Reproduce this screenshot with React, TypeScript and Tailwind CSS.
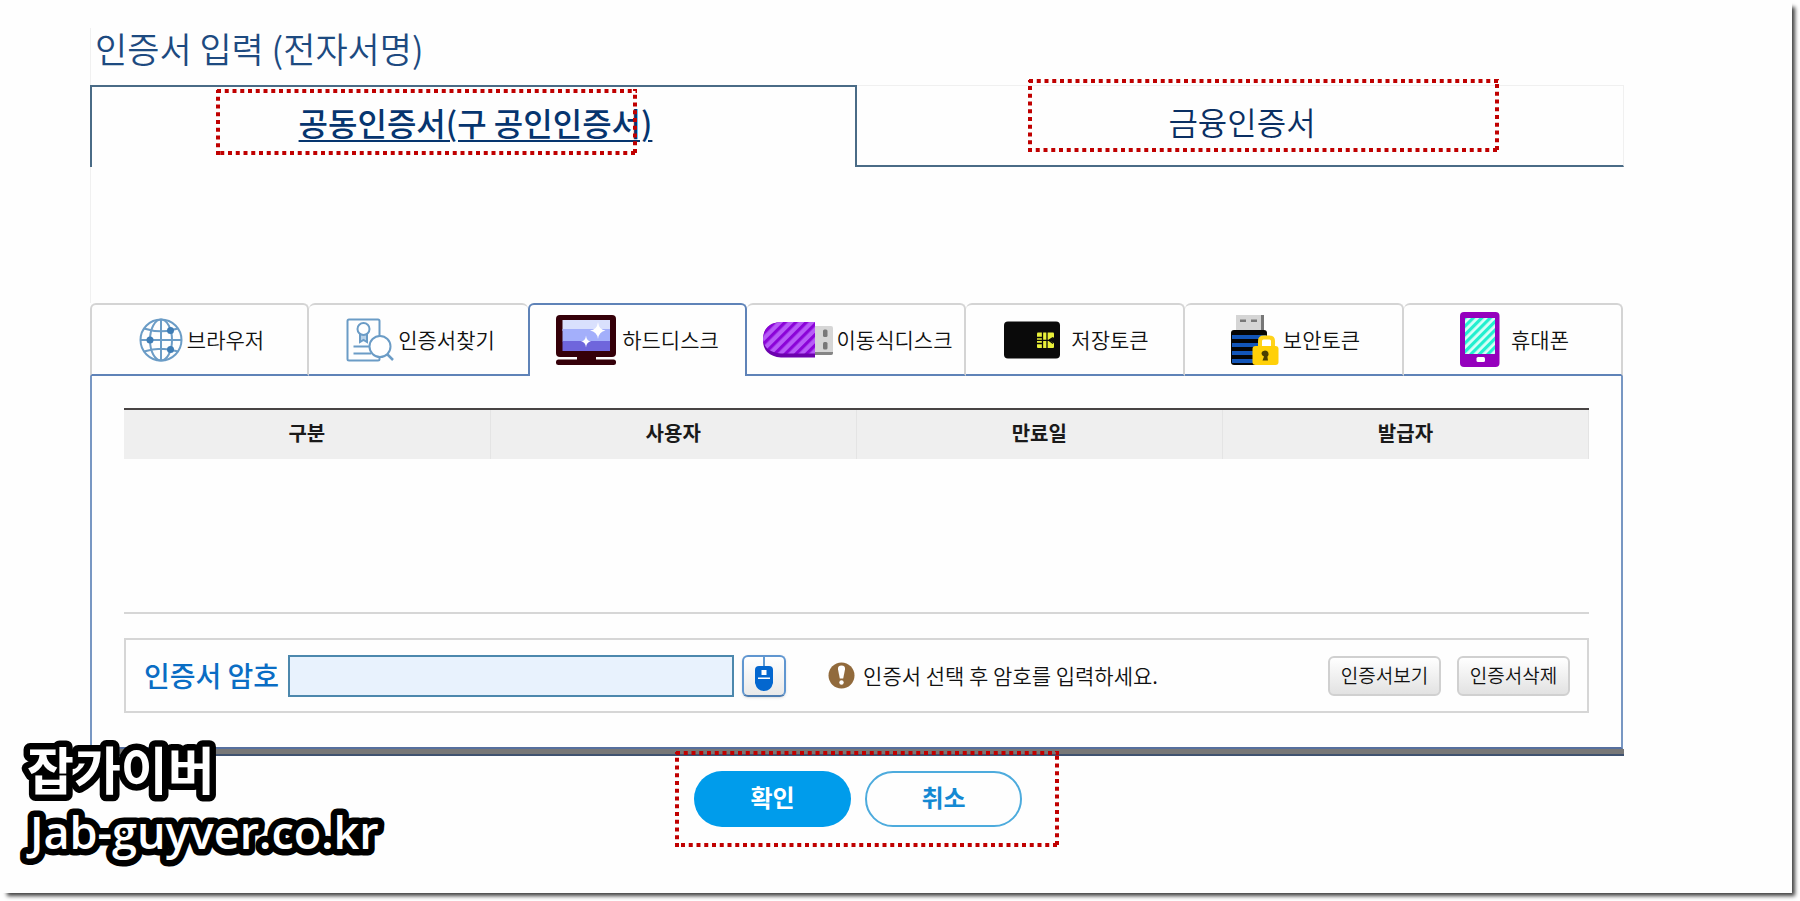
import type { ReactNode } from "react";

const GlobeIcon = () => (
  <svg width="44" height="44" viewBox="0 0 44 44" fill="none" stroke="#6b9cc6" strokeWidth="2" aria-hidden="true">
    <circle cx="22" cy="22" r="20.5" />
    <ellipse cx="22" cy="22" rx="11" ry="20.5" />
    <path d="M22 1.5v41M1.5 22h41M5 10.5Q22 16 39 10.5M5 33.5Q22 28 39 33.5" />
    <g fill="#3f7db5" stroke="none">
      <circle cx="31.500" cy="12.500" r="3.500" />
      <circle cx="11" cy="22" r="3.500" />
      <circle cx="31.500" cy="31.500" r="3.500" />
    </g>
  </svg>
);

const CertSearchIcon = () => (
  <svg width="48" height="44" viewBox="0 0 48 44" fill="none" stroke="#6b9cc6" strokeWidth="2" aria-hidden="true">
    <rect x="1.500" y="1.500" width="32" height="41" rx="1.500" />
    <path d="M14 15v9l3.500-2 3.500 2v-9" fill="#b9d2e8" />
    <circle cx="17.500" cy="11" r="6" fill="#fff" />
    <path d="M7.500 28.500H23M7.500 35.500H25" />
    <circle cx="34" cy="28.500" r="10.500" fill="#fff" />
    <path d="m41 36 6 6" strokeWidth="2.500" />
  </svg>
);

const MonitorIcon = () => (
  <svg width="62" height="52" viewBox="0 0 62 52" aria-hidden="true">
    <rect x="0" y="1" width="60" height="42" rx="4" fill="#350009" />
    <path d="M21 41h19v6H21z" fill="#350009" />
    <rect x="0" y="45.500" width="60" height="5.500" rx="2.500" fill="#350009" />
    <path d="M6.500 6H54v11H6.500z" fill="#d9e0fd" />
    <path d="M6.500 15H54v12.500H6.500z" fill="#a3affb" />
    <path d="M6.500 27H54v10H6.500z" fill="#6f66dc" />
    <path d="M42 8q1 8 7.500 8.500Q43 17.500 42 25q-1-7.500-8-8.500Q41 16 42 8zM30 21.500q.500 5.500 5 6-4.500.500-5 6-.500-5.500-5-6 4.500-.500 5-6z" fill="#fff" />
  </svg>
);

const UsbIcon = () => (
  <svg width="70" height="38" viewBox="0 0 70 38" aria-hidden="true">
    <defs>
      <pattern id="usb-stripes" width="7.500" height="7.500" patternUnits="userSpaceOnUse" patternTransform="rotate(45)">
        <rect width="7.500" height="7.500" fill="#b75cf7" />
        <rect width="3.200" height="7.500" fill="#8b04d8" />
      </pattern>
    </defs>
    <path d="M52 5h16q2 0 2 2v25q0 2-2 2H52z" fill="#d6d6d6" />
    <path d="M52 31h18v1q0 2-2 2H52z" fill="#858585" />
    <rect x="60" y="8.500" width="4.500" height="7.500" rx="1.500" fill="#787878" />
    <rect x="60" y="21" width="4.500" height="7.500" rx="1.500" fill="#787878" />
    <path d="M52 1H18Q0 2 0 19q0 16 18 17.500h34z" fill="#6c02ae" />
    <path d="M52 1H18Q1 2 0 18q1 13 18 14.500h34z" fill="url(#usb-stripes)" />
  </svg>
);

const CardIcon = () => (
  <svg width="63" height="38" viewBox="0 0 63 38" aria-hidden="true">
    <rect x="0" y="0.500" width="56" height="37" rx="4" fill="#0a0a0a" />
    <rect x="33" y="11.500" width="17" height="15.500" rx="1" fill="#e9f03a" />
    <path d="M38.500 11v16.500M43 11v16.500M33 16.500h5.500M33 19.300h17M33 22.500h5.500M45 19l4-2.500M45 19.500l4 3" stroke="#0a0a0a" strokeWidth="1.300" />
    <path d="M45 19.300l5-3v6z" fill="#0a0a0a" />
  </svg>
);

const SecureUsbIcon = () => (
  <svg width="48" height="52" viewBox="0 0 48 52" aria-hidden="true">
    <path d="M5 1h28v16H5z" fill="#d5d5d5" />
    <path d="M30 1h3v16h-3z" fill="#777" />
    <path d="M9 5.500h6V8H9zM20 5.500h6V8h-6z" fill="#777" />
    <rect x="0" y="16" width="36" height="35" rx="3" fill="#050505" />
    <path d="M1 21h34v4H1zM1 29h34v4H1zM1 37h34v4H1zM1 45h34v4H1z" fill="#1255b8" />
    <path d="M29 34v-7q0-3.500 3.500-3.500h6Q42 23.500 42 27v7" fill="#fff" stroke="#ffd31a" strokeWidth="4" />
    <rect x="21.500" y="32" width="26" height="19" rx="3" fill="#ffd008" />
    <path d="M34 36.500a3.600 3.600 0 0 1 2.400 6.300L37 46.500h-5.500l1.500-4q-2.500-1-2.500-3 0-2.500 3.500-3z" fill="#4a3d00" />
  </svg>
);

const PhoneIcon = () => (
  <svg width="47" height="55" viewBox="0 0 47 55" aria-hidden="true">
    <defs>
      <pattern id="phone-stripes" width="6" height="6" patternUnits="userSpaceOnUse" patternTransform="rotate(45)">
        <rect width="6" height="6" fill="#d9fff8" />
        <rect width="3.200" height="6" fill="#22efcf" />
      </pattern>
    </defs>
    <rect x="0" y="0" width="39.500" height="55" rx="4" fill="#9500bd" />
    <path d="M5 6h30v36H5z" fill="url(#phone-stripes)" />
    <rect x="16.500" y="45" width="8.500" height="5" rx="1.500" fill="#fff" />
  </svg>
);

const MouseIcon = () => (
  <svg width="22" height="36" viewBox="0 0 22 36" aria-hidden="true">
    <path d="M11 0v11" stroke="#2b79c4" strokeWidth="1.500" />
    <path d="M2 13q0-4 4-4h10q4 0 4 4v13q-2 8-9 8t-9-8z" fill="#0467cf" />
    <path d="M8.500 13h5v5h-5zM5 20.500h12V22H5z" fill="#fff" />
  </svg>
);

const AlertIcon = () => (
  <svg width="27" height="27" viewBox="0 0 27 27" aria-hidden="true">
    <circle cx="13.500" cy="13.500" r="13" fill="#916a3c" />
    <path d="M13.500 3.500q4 0 3.500 4l-1.800 9h-3.400L10 7.500q-.500-4 3.500-4z" fill="#fff" />
    <circle cx="13.500" cy="20.500" r="2.200" fill="#fff" />
  </svg>
);

const Marker = ({ className }: { className: string }) => (
  <svg className={`pointer-events-none absolute ${className}`} aria-hidden="true">
    <g stroke="#c00000" strokeWidth="4" strokeDasharray="4 3.750">
      <line x1="1" y1="2" x2="100%" y2="2" />
      <line x1="2" y1="100%" x2="2" y2="1" />
    </g>
    <svg x="100%" y="100%" overflow="visible">
      <g stroke="#c00000" strokeWidth="4" strokeDasharray="4 3.750">
        <line x1="-2" y1="-2" x2="-2" y2="-100%" />
        <line x1="-2" y1="-2" x2="-100%" y2="-2" />
      </g>
    </svg>
  </svg>
);

const Watermark = () => (
  <svg
    width="400"
    height="170"
    viewBox="0 0 400 170"
    className="pointer-events-none absolute bottom-0 left-0"
    fill="#fff"
    stroke="#000"
    strokeWidth="13"
    strokeLinejoin="round"
    paintOrder="stroke"
  >
    <text x="27" y="67" className="font-['Noto_Sans_CJK_KR',sans-serif] text-[51px] font-bold">잡가이버</text>
    <text x="30" y="126" className="font-['Open_Sans',sans-serif] text-[45px] font-semibold">Jab-guyver.co.kr</text>
  </svg>
);

const media: { name: string; icon: ReactNode }[] = [
  { name: "브라우저", icon: <GlobeIcon /> },
  { name: "인증서찾기", icon: <CertSearchIcon /> },
  { name: "하드디스크", icon: <MonitorIcon /> },
  { name: "이동식디스크", icon: <UsbIcon /> },
  { name: "저장토큰", icon: <CardIcon /> },
  { name: "보안토큰", icon: <SecureUsbIcon /> },
  { name: "휴대폰", icon: <PhoneIcon /> },
];

const columns = ["구분", "사용자", "만료일", "발급자"];

export default function App() {
  return (
    <div className="min-h-screen bg-white pr-2 pb-2 font-['Noto_Sans_CJK_KR',sans-serif]">
      <div className="relative min-h-[893px] bg-[#fefefe] pt-7 pr-[168px] pl-[90px] shadow-[5px_5px_4px_-2px_rgba(0,0,0,0.75)]">
        <div className="border-l border-[#f0f0f0]">
          <h1 className="h-[57px] pt-0.5 pl-1 text-[35px] leading-9 font-[350] text-[#1d4a80]">인증서 입력 (전자서명)</h1>
        </div>

        <div role="tablist" aria-label="인증서 종류" className="grid h-[82px] grid-cols-2 text-[32px] text-[#0a2f63]">
          <div className="relative">
            <button role="tab" aria-selected="true" className="h-full w-full border-2 border-b-0 border-[#4a6b86] pb-2.5 pl-1 font-medium text-[#06356f] underline decoration-2 underline-offset-4">
              공동인증서(구 공인인증서)
            </button>
            <Marker className="top-1 left-[126px] h-[66px] w-[421px]" />
          </div>
          <div className="relative">
            <button role="tab" aria-selected="false" className="h-full w-full border-t border-r border-b-2 border-t-[#f0f0f0] border-r-[#f0f0f0] border-b-[#4a6b86] pb-2.5 pl-1 font-[350]">
              금융인증서
            </button>
            <Marker className="-top-1.5 left-[171px] h-[73px] w-[471px]" />
          </div>
        </div>

        <div className="h-[136px] border-l border-[#f0f0f0]" />

        <div className="mr-px">
          <div role="tablist" aria-label="저장 매체" className="grid h-[73px] grid-cols-7 text-[21px] font-[350] text-[#111]">
            {media.map((item, i) => {
              const selected = i === 2;
              return (
                <button
                  key={item.name}
                  role="tab"
                  aria-selected={selected}
                  className={
                    selected
                      ? "flex items-center justify-center gap-1 rounded-t-md border-2 border-b-0 border-[#5f83b8] pb-0.5 whitespace-nowrap"
                      : i > 2
                        ? "flex items-center justify-center gap-1 rounded-t-md border-t-2 border-r-2 border-b-2 border-t-[#d4d4d4] border-r-[#d4d4d4] border-b-[#5f83b8] pl-1 whitespace-nowrap"
                        : i === 1
                          ? "flex items-center justify-center gap-1 rounded-t-md border-t-2 border-b-2 border-t-[#d4d4d4] border-b-[#5f83b8] pl-1 whitespace-nowrap"
                          : "flex items-center justify-center gap-1 rounded-t-md border-2 border-[#d4d4d4] border-b-[#5f83b8] pl-1 whitespace-nowrap"
                  }
                >
                  {item.icon}
                  <span>{item.name}</span>
                </button>
              );
            })}
          </div>

          <main className="border-x-2 border-b-2 border-x-[#7897c3] border-b-[#566f9e] px-8 pt-8 pb-[34px]">
            <div className="h-[206px] border-b-2 border-[#d6d6d6]">
              <table className="w-full table-fixed border-collapse text-[20px]">
                <thead>
                  <tr>
                    {columns.map((name) => (
                      <th key={name} scope="col" className="h-[50px] border-t-2 border-r border-t-[#484444] border-r-[#e4e4e4] bg-[#efefef] pb-1 font-bold text-[#1a1a1a]">
                        {name}
                      </th>
                    ))}
                  </tr>
                </thead>
              </table>
            </div>

            <form className="mt-6 flex h-[75px] items-center border-2 border-[#d6d6d6] pr-[17px] pl-[18px]" onSubmit={(e) => e.preventDefault()}>
              <label htmlFor="cert-password" className="pb-0.5 text-[28px] font-medium whitespace-nowrap text-[#0a6dc4]">인증서 암호</label>
              <input id="cert-password" type="password" className="ml-[9px] h-[42px] w-[446px] border-2 border-[#4c88ad] bg-[#e8f2fd] px-2 text-[21px] outline-none" />
              <button type="button" aria-label="마우스로 입력" className="ml-2 flex h-[42px] w-11 items-start justify-center rounded-md border-2 border-[#6096d0] border-b-[#4d7cb0] bg-linear-to-b from-white to-[#e9e9e9] shadow-sm">
                <MouseIcon />
              </button>
              <p className="ml-[42px] flex items-center gap-2 text-[21px] font-[350] whitespace-nowrap text-[#111]">
                <AlertIcon />
                인증서 선택 후 암호를 입력하세요.
              </p>
              <div className="ml-auto flex gap-4 text-[19px] font-[350] text-[#111]">
                <button type="button" className="h-10 w-[113px] rounded-md border-2 border-[#d0d0d0] bg-linear-to-b from-white to-[#e2e2e2]">인증서보기</button>
                <button type="button" className="h-10 w-[113px] rounded-md border-2 border-[#d0d0d0] bg-linear-to-b from-white to-[#e2e2e2]">인증서삭제</button>
              </div>
            </form>
          </main>
        </div>
        <div className="h-[7px] border-b-2 border-[#3f5270] bg-[#777]" />

        <div className="flex pt-[15px] pl-[604px]">
          <div className="relative flex gap-[14px] text-[24px] font-bold">
            <button className="h-14 w-[157px] rounded-full bg-[#009ceb] pb-1 text-white">확인</button>
            <button className="h-14 w-[157px] rounded-full border-2 border-[#4dabdd] pb-1 text-[#1489d3]">취소</button>
            <Marker className="-top-5 -left-[19px] h-[96px] w-[384px]" />
          </div>
        </div>

        <Watermark />
      </div>
    </div>
  );
}
